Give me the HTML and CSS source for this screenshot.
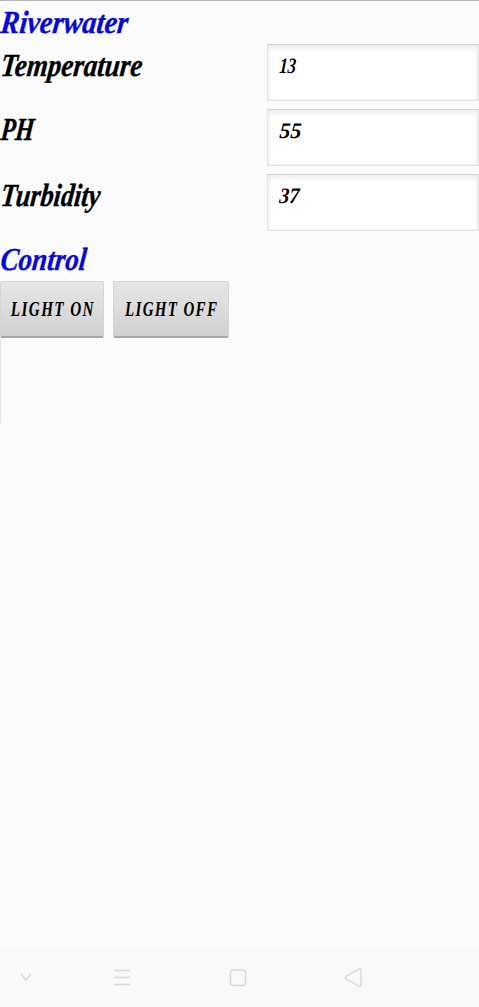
FILE: index.html
```html
<!DOCTYPE html>
<html lang="en">
<head>
<meta charset="utf-8">
<title>Riverwater</title>
<link rel="stylesheet" href="styles.css">
</head>
<body>
<main class="screen">
  <h1 class="heading"><span class="label riverwater">Riverwater</span></h1>
  <section class="readings">
    <div class="row"><span class="label temperature">Temperature</span><div class="field"><span class="value thirteen">13</span></div></div>
    <div class="row"><span class="label ph">PH</span><div class="field"><span class="value">55</span></div></div>
    <div class="row"><span class="label turbidity">Turbidity</span><div class="field"><span class="value seven">37</span></div></div>
  </section>
  <h2 class="heading control-heading"><span class="label control">Control</span></h2>
  <div class="actions">
    <button class="button on"><span class="caption caption-on">LIGHT ON</span></button>
    <button class="button off"><span class="caption caption-off">LIGHT OFF</span></button>
  </div>
  <div class="divider"></div>
</main>
<nav class="navbar">
  <svg class="icons" width="479" height="59" viewBox="0 0 479 59" fill="none" stroke="#dadada" stroke-width="1.5" stroke-linecap="round" stroke-linejoin="round">
    <path d="M21.5 26.5L26 32L30.5 26.5"/>
    <path d="M114 22.5H130M114 29.5H130M114 36.5H130" stroke-linecap="butt"/>
    <rect x="230.5" y="22" width="15" height="15.5" rx="3"/>
    <path d="M346 28.3L358.5 21.3Q361 20 361 22.5V36.5Q361 39 358.5 37.8L346 30.8Q344.5 29.6 346 28.3Z"/>
  </svg>
</nav>
</body>
</html>
```
FILE: styles.css
```css
* { box-sizing: border-box; }
body {
  margin: 0;
  height: 1007px;
  display: flex;
  flex-direction: column;
  overflow: hidden;
  background: #fbfbfb;
  color: #000;
  font-family: "Liberation Serif", serif;
  font-style: italic;
  font-weight: 700;
}
.screen { flex: 1; border-top: 1px solid #b5b5b5; }
.heading { margin: 0; height: 43px; color: #0808d4; font-size: 32px; }
.label {
  display: block;
  width: max-content;
  font-size: 32px;
  line-height: 36px;
  padding-top: 3px;
  white-space: nowrap;
  transform-origin: left 30px;
  -webkit-text-stroke: .35px currentColor;
}
.riverwater { transform: skewX(-6deg) scaleX(.885); }
.temperature { transform: translateY(1px) skewX(-6deg) scaleX(.845); }
.ph { transform: skewX(-6deg) scaleX(.75); }
.turbidity { transform: translateY(1px) skewX(-6deg) scaleX(.82); }
.control { transform: translateY(1px) skewX(-6deg) scaleX(.845); }
.readings { display: grid; gap: 8px; }
.row { display: grid; grid-template-columns: 267px 212px; height: 57px; }
.row .label { padding-top: 2px; }
.field {
  padding: 9px 0 0 11px;
  border: 1px solid #e2e2e2;
  border-top-color: #d4d4d4;
  background: #fff;
  box-shadow: inset 0 3px 6px #ececec, inset 0 0 2px #e4e4e4;
}
.value {
  display: block;
  width: max-content;
  font-size: 22px;
  line-height: 24px;
  transform-origin: left 19px;
  transform: skewX(-4deg);
}
.thirteen { transform: skewX(-4deg) scaleX(.76); }
.seven { transform: skewX(-4deg) scaleX(.9); }
.control-heading { height: 50px; padding-top: 6px; }
.actions { display: flex; gap: 9px; height: 57px; }
.button {
  height: 57px;
  padding: 0;
  display: flex;
  align-items: center;
  justify-content: center;
  border: 1px solid #d5d5d5;
  border-bottom: 2px solid #a7a7a7;
  border-radius: 2px;
  background: linear-gradient(#e6e6e6, #d1d1d1);
  color: #000;
  font: italic 700 22px/26px "Liberation Serif", serif;
}
.on { width: 104px; }
.off { width: 116px; }
.caption { white-space: nowrap; letter-spacing: 2px; }
.caption-on { transform: translateX(1px) scaleX(.69); }
.caption-off { transform: translateX(1px) scaleX(.68); }
.divider { width: 1px; height: 85px; background: #e6e6e6; }
.navbar { height: 59px; background: #f9f9f9; }
.icons { display: block; }
```
